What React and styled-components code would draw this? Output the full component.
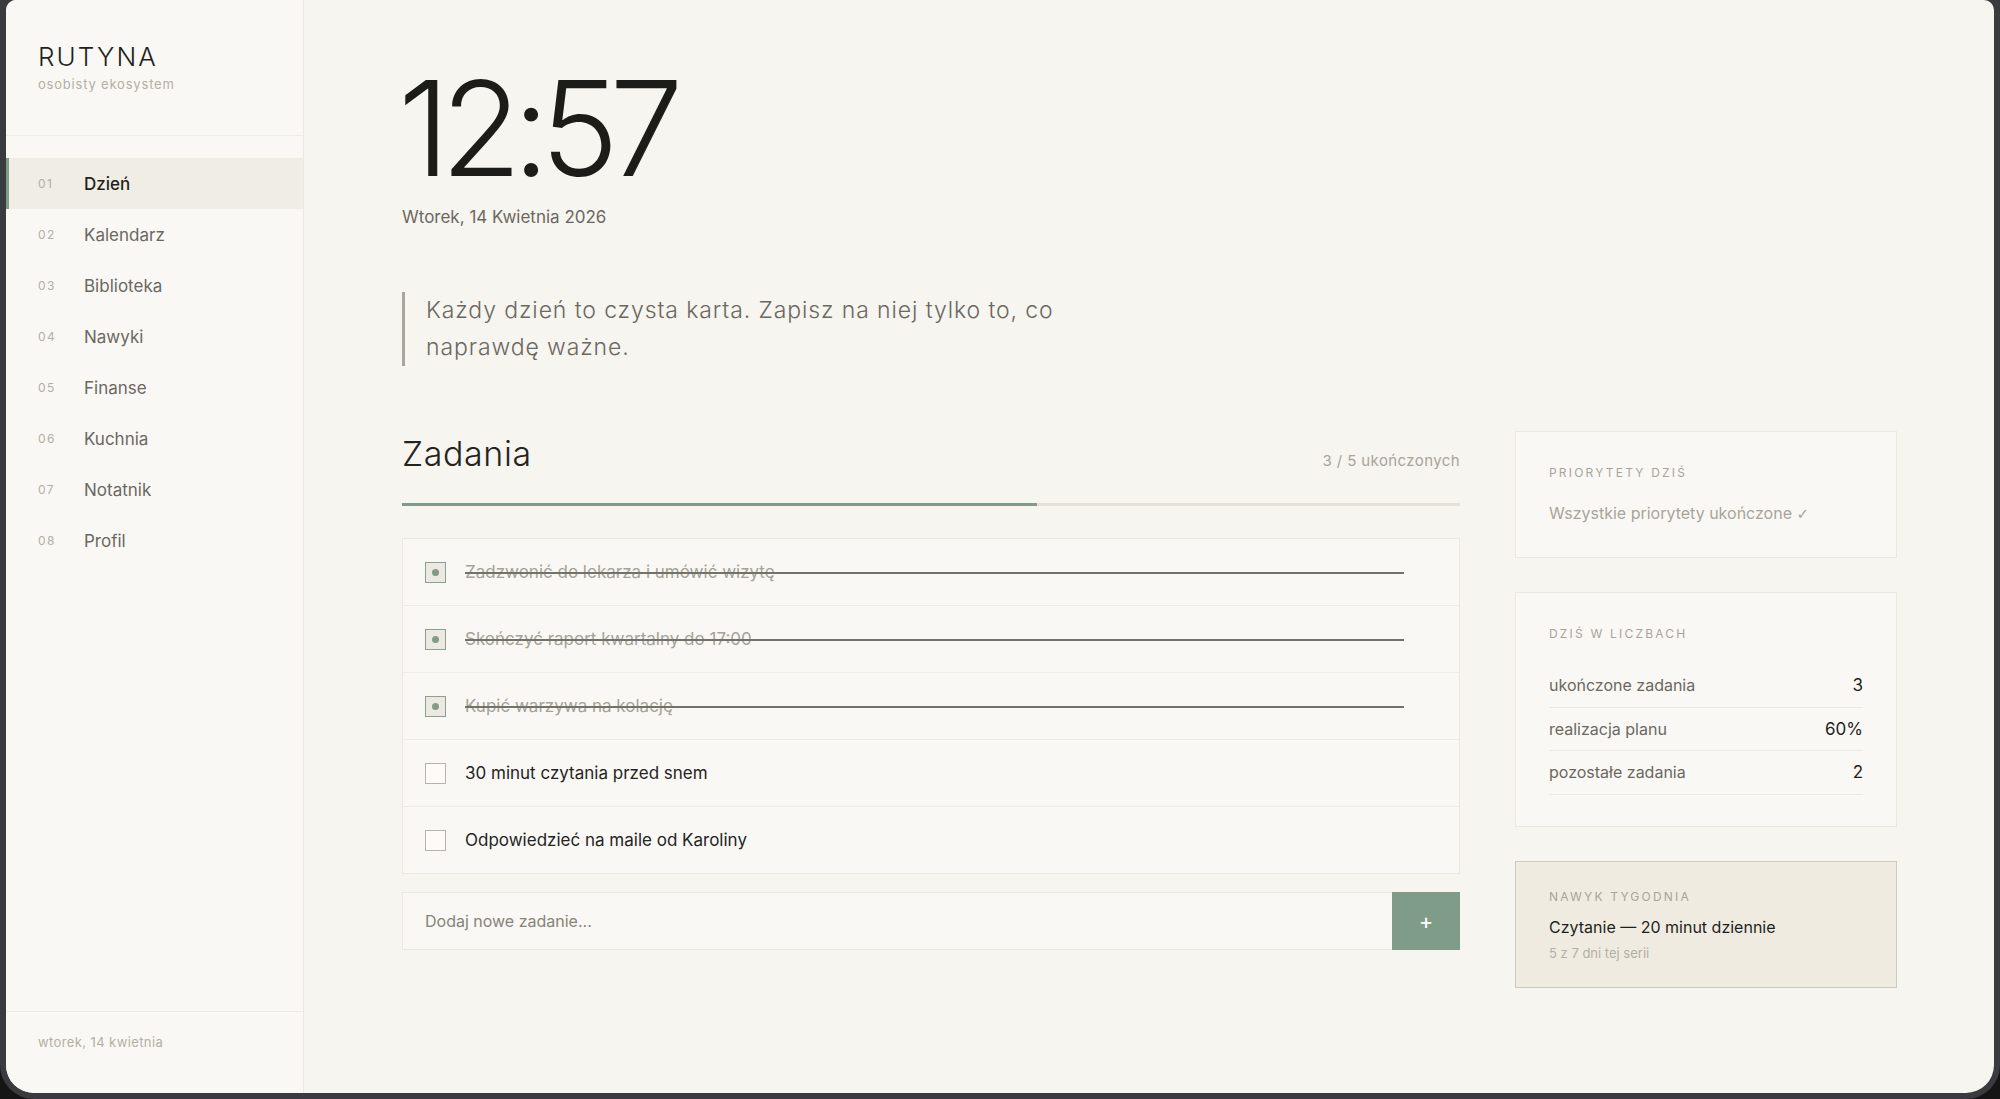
import React from "react";
import styled, { createGlobalStyle } from "styled-components";

const Global = createGlobalStyle`
  html, body { margin: 0; padding: 0; background: #151515; }
  body { font-family: Inter, "Noto Sans", sans-serif; -webkit-font-smoothing: antialiased; }
  * { box-sizing: border-box; }
`;

const Frame = styled.div`
  height: 1099px;
  width: 2000px;
  background: #3a3b3e;
  border-radius: 0 0 34px 34px;
  padding: 0 6px 6px 6px;
`;

const Shell = styled.div`
  height: 100%;
  display: flex;
  border-radius: 10px 10px 28px 28px;
  overflow: hidden;
  background: #f7f5ef;
`;

const Sidebar = styled.aside`
  width: 298px;
  flex-shrink: 0;
  background: #faf8f4;
  border-right: 1px solid #ebe8e1;
  display: flex;
  flex-direction: column;
`;

const Brand = styled.div`
  padding: 41px 32px 42px;
  border-bottom: 1px solid #efece6;
`;

const Logo = styled.div`
  font-size: 26px;
  line-height: 32px;
  font-weight: 300;
  letter-spacing: 2.1px;
  color: #1f1f1c;
`;

const Tagline = styled.div`
  margin-top: 2px;
  font-size: 13px;
  line-height: 18px;
  letter-spacing: 0.8px;
  color: #b3afa6;
`;

const Nav = styled.nav`
  padding-top: 22px;
  flex: 1;
  display: flex;
  flex-direction: column;
`;

const NavItem = styled.div`
  height: 51px;
  display: flex;
  align-items: center;
  padding-left: 29px;
  border-left: 3px solid ${(p) => (p.$active ? "#7f9c88" : "transparent")};
  background: ${(p) => (p.$active ? "#f0ede5" : "transparent")};
`;

const NavNum = styled.span`
  width: 46px;
  font-size: 12px;
  letter-spacing: 1.5px;
  color: #b3afa6;
`;

const NavLabel = styled.span`
  font-size: 17px;
  color: ${(p) => (p.$active ? "#1f1f1c" : "#6b6862")};
  font-weight: ${(p) => (p.$active ? 500 : 400)};
`;

const SideFooter = styled.div`
  border-top: 1px solid #efece6;
  padding: 21px 32px 42px;
  font-size: 13px;
  line-height: 18px;
  letter-spacing: 0.4px;
  color: #b3afa6;
`;

const Main = styled.main`
  flex: 1;
  padding: 62px 97px 0 98px;
  display: flex;
  flex-direction: column;
`;

const Clock = styled.div`
  font-size: 132px;
  line-height: 1;
  font-weight: 300;
  letter-spacing: -0.07em;
  color: #1c1c19;
  margin-left: -4px;
`;

const DateLine = styled.div`
  margin-top: 11px;
  font-size: 17px;
  line-height: 24px;
  color: #6b6862;
`;

const Quote = styled.blockquote`
  margin: 63px 0 0;
  padding-left: 21px;
  border-left: 3px solid #aaa69d;
  font-size: 23px;
  line-height: 37px;
  font-weight: 300;
  letter-spacing: 0.9px;
  color: #6b6862;
`;

const Columns = styled.div`
  margin-top: 65px;
  display: grid;
  grid-template-columns: 1fr 382px;
  column-gap: 55px;
  align-items: start;
`;

const TasksCol = styled.section`
  display: flex;
  flex-direction: column;
`;

const TasksHead = styled.div`
  display: flex;
  justify-content: space-between;
  align-items: baseline;
`;

const TasksTitle = styled.h2`
  margin: 0;
  font-size: 34px;
  line-height: 46px;
  font-weight: 300;
  letter-spacing: 0.6px;
  color: #24241f;
`;

const TasksCount = styled.span`
  font-size: 15px;
  letter-spacing: 0.4px;
  color: #a8a49b;
`;

const Progress = styled.div`
  margin-top: 26px;
  height: 3px;
  background: #e4e1d9;
`;

const ProgressFill = styled.div`
  height: 100%;
  background: #7f9c88;
`;

const TaskList = styled.div`
  margin-top: 32px;
  background: #faf8f4;
  border: 1px solid #ebe8e1;
`;

const TaskRow = styled.div`
  height: 67px;
  display: flex;
  align-items: center;
  padding: 0 55px 0 22px;
  border-bottom: 1px solid #efece6;
  &:last-child { border-bottom: none; height: 66px; }
`;

const Check = styled.span`
  width: 21px;
  height: 21px;
  flex-shrink: 0;
  display: flex;
  align-items: center;
  justify-content: center;
  border: 1.5px solid ${(p) => (p.$done ? "#8e9f92" : "#b8b4ab")};
  background: ${(p) => (p.$done ? "#ebe9e2" : "#fcfbf8")};
  &::after {
    content: "";
    display: ${(p) => (p.$done ? "block" : "none")};
    width: 7px;
    height: 7px;
    border-radius: 50%;
    background: #7f9c88;
  }
`;

const TaskText = styled.span`
  position: relative;
  flex: 1;
  margin-left: 19px;
  font-size: 17px;
  line-height: 24px;
  color: ${(p) => (p.$done ? "#a5a29a" : "#24241f")};
  &::after {
    content: "";
    display: ${(p) => (p.$done ? "block" : "none")};
    position: absolute;
    left: 0;
    right: 0;
    top: 12px;
    height: 1.5px;
    background: #6f736a;
  }
`;

const AddRow = styled.div`
  margin-top: 18px;
  height: 58px;
  display: flex;
  background: #faf8f4;
  border: 1px solid #ebe8e1;
`;

const AddInput = styled.input`
  flex: 1;
  border: none;
  outline: none;
  background: transparent;
  padding: 0 22px;
  font-family: Inter, sans-serif;
  font-size: 16px;
  color: #24241f;
  &::placeholder { color: #86837b; }
`;

const AddButton = styled.button`
  width: 68px;
  border: none;
  background: #7f9c88;
  color: #ffffff;
  font-family: Inter, sans-serif;
  font-size: 22px;
  font-weight: 400;
  margin: -1px -1px -1px 0;
`;

const Aside = styled.aside`
  display: flex;
  flex-direction: column;
  gap: 34px;
`;

const Card = styled.div`
  background: ${(p) => (p.$tint ? "#efebe1" : "#faf8f4")};
  border: 1px solid ${(p) => (p.$tint ? "#cfcac0" : "#ebe8e1")};
  padding: ${(p) => p.$pad};
`;

const CardLabel = styled.div`
  font-size: 12px;
  line-height: 16px;
  letter-spacing: 2.2px;
  text-transform: uppercase;
  color: #a8a49b;
`;

const Muted = styled.div`
  margin-top: 20px;
  font-size: 16px;
  line-height: 24px;
  color: #a8a49b;
`;

const Tick = styled.span`
  font-family: "DejaVu Sans", sans-serif;
  font-size: 15px;
`;

const StatList = styled.div`
  margin-top: 22px;
`;

const StatRow = styled.div`
  height: 43.5px;
  display: flex;
  align-items: center;
  justify-content: space-between;
  border-bottom: 1px solid #ece9e2;
`;

const StatName = styled.span`
  font-size: 16px;
  color: #6b6862;
`;

const StatValue = styled.span`
  font-size: 17px;
  color: #1f1f1c;
`;

const HabitTitle = styled.div`
  margin-top: 10px;
  font-size: 16px;
  line-height: 24px;
  color: #1f1f1c;
`;

const HabitSub = styled.div`
  margin-top: 4px;
  font-size: 13px;
  line-height: 20px;
  color: #b3afa6;
`;

const navItems = [
  "Dzień",
  "Kalendarz",
  "Biblioteka",
  "Nawyki",
  "Finanse",
  "Kuchnia",
  "Notatnik",
  "Profil",
];

const tasks = [
  { text: "Zadzwonić do lekarza i umówić wizytę", done: true },
  { text: "Skończyć raport kwartalny do 17:00", done: true },
  { text: "Kupić warzywa na kolację", done: true },
  { text: "30 minut czytania przed snem", done: false },
  { text: "Odpowiedzieć na maile od Karoliny", done: false },
];

const stats = [
  ["ukończone zadania", "3"],
  ["realizacja planu", "60%"],
  ["pozostałe zadania", "2"],
];

export default function App() {
  const doneCount = tasks.filter((t) => t.done).length;
  const pct = (doneCount / tasks.length) * 100;
  return (
    <>
      <Global />
      <Frame>
        <Shell>
          <Sidebar>
            <Brand>
              <Logo>RUTYNA</Logo>
              <Tagline>osobisty ekosystem</Tagline>
            </Brand>
            <Nav>
              {navItems.map((label, i) => (
                <NavItem key={label} $active={i === 0}>
                  <NavNum>{String(i + 1).padStart(2, "0")}</NavNum>
                  <NavLabel $active={i === 0}>{label}</NavLabel>
                </NavItem>
              ))}
            </Nav>
            <SideFooter>wtorek, 14 kwietnia</SideFooter>
          </Sidebar>

          <Main>
            <Clock>12:57</Clock>
            <DateLine>Wtorek, 14 Kwietnia 2026</DateLine>
            <Quote>
              Każdy dzień to czysta karta. Zapisz na niej tylko to, co
              <br />
              naprawdę ważne.
            </Quote>

            <Columns>
              <TasksCol>
                <TasksHead>
                  <TasksTitle>Zadania</TasksTitle>
                  <TasksCount>
                    {doneCount} / {tasks.length} ukończonych
                  </TasksCount>
                </TasksHead>
                <Progress>
                  <ProgressFill style={{ width: `${pct}%` }} />
                </Progress>
                <TaskList>
                  {tasks.map((t) => (
                    <TaskRow key={t.text}>
                      <Check $done={t.done} />
                      <TaskText $done={t.done}>{t.text}</TaskText>
                    </TaskRow>
                  ))}
                </TaskList>
                <AddRow>
                  <AddInput placeholder="Dodaj nowe zadanie..." />
                  <AddButton>+</AddButton>
                </AddRow>
              </TasksCol>

              <Aside>
                <Card $pad="33px 33px 31px">
                  <CardLabel>Priorytety dziś</CardLabel>
                  <Muted>
                    Wszystkie priorytety ukończone <Tick>✓</Tick>
                  </Muted>
                </Card>
                <Card $pad="33px 33px 31px">
                  <CardLabel>Dziś w liczbach</CardLabel>
                  <StatList>
                    {stats.map(([name, value]) => (
                      <StatRow key={name}>
                        <StatName>{name}</StatName>
                        <StatValue>{value}</StatValue>
                      </StatRow>
                    ))}
                  </StatList>
                </Card>
                <Card $tint $pad="27px 33px 24px">
                  <CardLabel>Nawyk tygodnia</CardLabel>
                  <HabitTitle>Czytanie — 20 minut dziennie</HabitTitle>
                  <HabitSub>5 z 7 dni tej serii</HabitSub>
                </Card>
              </Aside>
            </Columns>
          </Main>
        </Shell>
      </Frame>
    </>
  );
}
